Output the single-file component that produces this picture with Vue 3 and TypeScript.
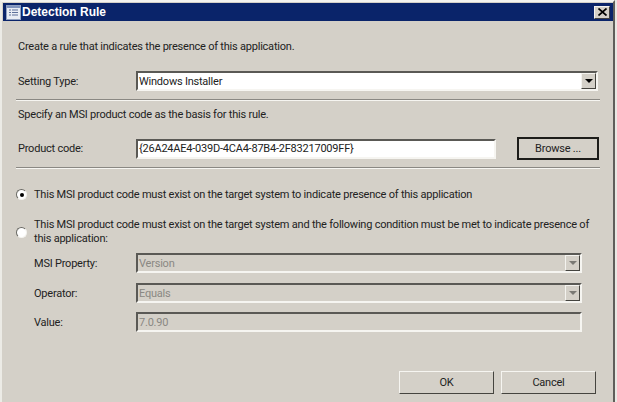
<script setup lang="ts">
const testId = 'detection-rule'
</script>

<template>
  <div class="window" :data-id="testId">
    <div class="titlebar">
      <svg class="app-icon" width="15" height="15" viewBox="0 0 15 15">
        <rect x="0.5" y="0.5" width="14" height="14" fill="#e8ecf4" stroke="#8f9fc0" />
        <rect x="1" y="1" width="13" height="2" fill="#7f93bd" />
        <path d="M3 5h2M3 7.5h2M3 10h2M6 5h6M6 7.5h6M6 10h6" stroke="#5c6f9a" stroke-width="1.2" />
      </svg>
      <span class="title">Detection Rule</span>
      <button class="close" type="button">
        <svg width="9" height="8" viewBox="0 0 9 8"><path d="M0.5 0.5L8.5 7.5M8.5 0.5L0.5 7.5" stroke="#000" stroke-width="1.7" /></svg>
      </button>
    </div>
    <div class="body">
      <p class="intro">Create a rule that indicates the presence of this application.</p>
      <div class="row type-row">
        <label class="lbl">Setting Type:</label>
        <div class="combo main-combo">
          <span>Windows Installer</span>
          <span class="arrow"><i class="tri"></i></span>
        </div>
      </div>
      <hr class="sep first-sep" />
      <p class="specify">Specify an MSI product code as the basis for this rule.</p>
      <div class="row code-row">
        <label class="lbl">Product code:</label>
        <div class="field code-field">{26A24AE4-039D-4CA4-87B4-2F83217009FF}</div>
        <button class="browse" type="button">Browse ...</button>
      </div>
      <hr class="sep second-sep" />
      <div class="option opt-one">
        <span class="radio"><i class="dot"></i></span>
        <span>This MSI product code must exist on the target system to indicate presence of this application</span>
      </div>
      <div class="option opt-two">
        <span class="radio"></span>
        <span class="wrap-text">This MSI product code must exist on the target system and the following condition must be met to indicate presence of this application:</span>
      </div>
      <div class="conditions">
        <div class="row cond">
          <label class="lbl sub">MSI Property:</label>
          <div class="combo off"><span>Version</span><span class="arrow"><i class="tri"></i></span></div>
        </div>
        <div class="row cond">
          <label class="lbl sub">Operator:</label>
          <div class="combo off"><span>Equals</span><span class="arrow"><i class="tri"></i></span></div>
        </div>
        <div class="row cond">
          <label class="lbl sub">Value:</label>
          <div class="combo off"><span>7.0.90</span></div>
        </div>
      </div>
      <div class="actions">
        <button class="btn" type="button">OK</button>
        <button class="btn" type="button">Cancel</button>
      </div>
    </div>
  </div>
</template>

<style>
html, body { margin: 0; background: #e9e8e3; }
</style>

<style scoped>
.window {
  box-sizing: border-box;
  width: 615px;
  height: 402px;
  background: #d4d0c8;
  border-top: 2px solid #f4f3ef;
  border-left: 2px solid #ecebe6;
  border-right: 2px solid #5f5e5a;
  padding: 1px 0 0 1px;
  font-family: Roboto, "Liberation Sans", sans-serif;
  font-size: 11px;
  letter-spacing: -0.22px;
  color: #222;
  overflow: hidden;
}
.titlebar {
  height: 18px;
  background: #0a246a;
  display: flex;
  align-items: center;
  padding: 0 3px 0 3px;
}
.app-icon { flex: none; }
.title {
  margin-left: 1px;
  color: #fff;
  font-family: "Liberation Sans", sans-serif;
  font-weight: 700;
  font-size: 12px;
  letter-spacing: 0;
  flex: 1;
}
.close {
  width: 16px;
  height: 13px;
  padding: 0;
  background: #d4d0c8;
  border: 1px solid;
  border-color: #f4f3ef #404040 #404040 #f4f3ef;
  display: flex;
  align-items: center;
  justify-content: center;
}
.body { padding: 0 13px 0 13px; }
p { margin: 0 0 0 2px; line-height: 14px; }
.intro { padding-top: 19px; }
.row { display: flex; align-items: center; padding-left: 2px; }
.lbl { width: 118px; flex: none; }
.lbl.sub { width: 102px; margin-left: 16px; }
.type-row { margin-top: 17px; }
.combo, .field {
  box-sizing: border-box;
  background: #fff;
  border: 2px solid;
  border-color: #5a5955 #f6f5f1 #f6f5f1 #5a5955;
  display: flex;
  align-items: center;
  padding-left: 1px;
}
.main-combo { width: 462px; height: 20px; justify-content: space-between; }
.arrow {
  box-sizing: border-box;
  width: 15px;
  height: 16px;
  background: #d4d0c8;
  border: 1px solid;
  border-color: #f4f3ef #45443f #45443f #f4f3ef;
  display: flex;
  align-items: center;
  justify-content: center;
}
.tri {
  width: 0;
  height: 0;
  border-left: 4px solid transparent;
  border-right: 4px solid transparent;
  border-top: 4px solid #000;
}
.sep {
  margin: 0;
  height: 0;
  border: 0;
  border-top: 1px solid #8a8883;
  border-bottom: 1px solid #f6f5f1;
}
.first-sep { margin-top: 8px; }
.specify { margin-top: 7px; }
.code-row { margin-top: 15px; }
.code-field { width: 360px; height: 20px; }
.browse {
  box-sizing: border-box;
  margin-left: 21px;
  width: 82px;
  height: 23px;
  background: #d4d0c8;
  border: 2px solid #1c1c1a;
  font: inherit;
  letter-spacing: inherit;
  color: inherit;
  padding: 0;
}
.second-sep { margin-top: 7px; }
.option { display: flex; line-height: 14px; }
.opt-one { margin-top: 19px; align-items: flex-start; }
.opt-two { margin-top: 16px; align-items: center; }
.wrap-text { max-width: 560px; }
.radio {
  box-sizing: border-box;
  flex: none;
  width: 11px;
  height: 11px;
  margin: 1px 7px 0 0;
  border-radius: 50%;
  background: #fff;
  border: 1px solid;
  border-color: #6a6964 #f4f3ef #f4f3ef #6a6964;
  display: flex;
  align-items: center;
  justify-content: center;
}
.dot { width: 4px; height: 4px; border-radius: 50%; background: #000; }
.conditions { display: flex; flex-direction: column; gap: 10px; margin-top: 7px; }
.cond:last-child { margin-top: -1px; }
.combo.off {
  width: 446px;
  height: 20px;
  background: #d4d0c8;
  color: #8a8883;
  justify-content: space-between;
}
.combo.off .tri { border-top-color: #7a7974; }
.actions {
  display: flex;
  justify-content: flex-end;
  gap: 7px;
  margin-top: 39px;
  padding-right: 4px;
}
.btn {
  box-sizing: border-box;
  width: 95px;
  height: 23px;
  background: #d4d0c8;
  border: 1px solid;
  border-color: #f6f5f1 #45443f #45443f #f6f5f1;
  font: inherit;
  letter-spacing: inherit;
  color: inherit;
  padding: 0;
}
</style>
